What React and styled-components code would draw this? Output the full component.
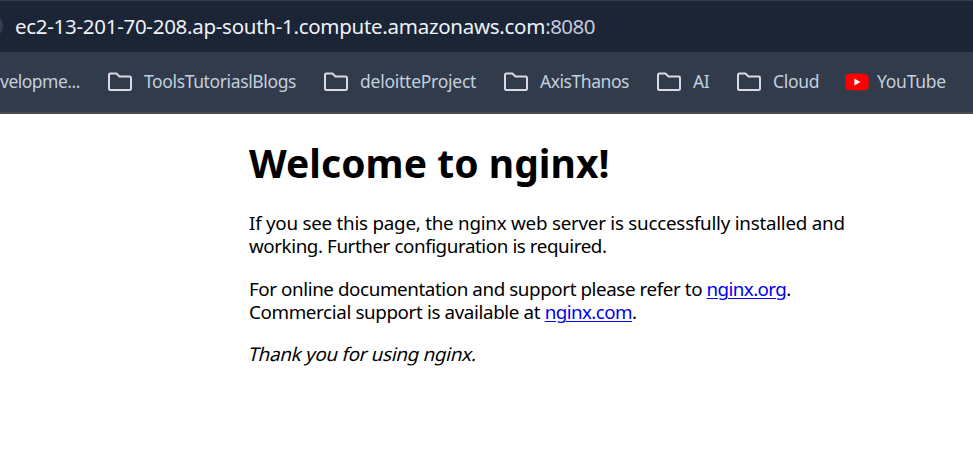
import React from 'react';
import styled, { createGlobalStyle } from 'styled-components';

const GlobalStyle = createGlobalStyle`
  * { box-sizing: border-box; }
  body { margin: 0; background: #fff; overflow: hidden; }
`;

const Browser = styled.div`
  width: 973px;
  height: 456px;
  overflow: hidden;
  background: #fff;
  font-family: "Noto Sans", "Open Sans", sans-serif;
`;

const AddressBar = styled.header`
  display: flex;
  align-items: center;
  height: 52px;
  padding-bottom: 2px;
  border-top: 1px solid #343e4e;
  background: #1c2535;
`;

const SiteButton = styled.span`
  flex: none;
  width: 24px;
  height: 24px;
  margin: 0 12px 0 -21px;
  border-radius: 50%;
  background: #353f4e;
`;

const Address = styled.span`
  font-size: 20.5px;
  line-height: 28px;
  letter-spacing: -0.28px;
  color: #eef2f8;
  white-space: nowrap;
`;

const Port = styled.span`
  letter-spacing: -0.5px;
  color: #c5c9dc;
`;

const BookmarksBar = styled.nav`
  display: flex;
  align-items: center;
  height: 62px;
  padding-bottom: 1px;
  border-bottom: 2px solid #4a4b4d;
  background: #313b4b;
`;

const Bookmark = styled.div`
  display: flex;
  flex: none;
  align-items: center;
  gap: ${({ $gap }) => $gap || 11}px;
  width: ${({ $width }) => $width}px;
  svg { flex: none; }
`;

const Label = styled.span`
  padding-bottom: 2px;
  font-size: 17.5px;
  line-height: 24px;
  letter-spacing: ${({ $spacing }) => $spacing}px;
  color: #c3cfde;
  white-space: nowrap;
`;

const Page = styled.main`
  width: 700px;
  margin-left: 249px;
  padding-top: 25px;
  color: #000;
`;

const Title = styled.h1`
  margin: 0 0 26px;
  font: bold 39px/47px "Noto Sans", sans-serif;
  letter-spacing: 0.05px;
`;

const Paragraph = styled.p`
  margin: 0 0 20px;
  font-size: 18.8px;
  line-height: 23px;
  white-space: nowrap;
`;

const Run = styled.span`
  letter-spacing: ${({ $spacing }) => $spacing}px;
`;

const Link = styled.a`
  letter-spacing: ${({ $spacing }) => $spacing}px;
  color: #0000ee;
  text-decoration: underline;
  text-decoration-thickness: 1px;
  text-underline-offset: 2px;
  text-decoration-skip-ink: auto;
`;

const ThanksLine = styled(Paragraph)`
  margin-top: -1px;
`;

const Thanks = styled.em`
  display: inline-block;
  font-style: normal;
  letter-spacing: -0.27px;
  transform: skewX(-14deg);
`;

const FolderIcon = () => (
  <svg width="25" height="20" viewBox="0 0 25 20" fill="none">
    <path
      d="M2.3 1.6H8.4L11.5 4.5H21.7Q23 4.5 23 5.9V16.7Q23 18.1 21.7 18.1H2.3Q1 18.1 1 16.7V3Q1 1.6 2.3 1.6Z"
      stroke="#dcd9e2"
      strokeWidth="2"
      strokeLinejoin="round"
    />
  </svg>
);

const YouTubeIcon = () => (
  <svg width="24" height="18" viewBox="0 0 24 18">
    <path
      d="M3 .9Q12 0 21 .9Q23.2 1.1 23.5 3.5Q24 9 23.5 14.3Q23.2 16.8 21 17Q12 17.8 3 17Q.8 16.8 .5 14.3Q0 9 .5 3.5Q.8 1.1 3 .9Z"
      fill="#ff0000"
    />
    <path d="M9.4 5.4L15.5 9L9.4 12.6Z" fill="#fff" />
  </svg>
);

const folders = [
  { name: 'ToolsTutoriaslBlogs', width: 216, spacing: -0.38 },
  { name: 'deloitteProject', width: 180, spacing: -0.25 },
  { name: 'AxisThanos', width: 153, spacing: -0.45 },
  { name: 'AI', width: 80, spacing: -0.5 },
  { name: 'Cloud', width: 108, spacing: -0.3 },
];

export default function App() {
  return (
    <Browser>
      <GlobalStyle />
      <AddressBar>
        <SiteButton />
        <Address>
          ec2-13-201-70-208.ap-south-1.compute.amazonaws.com<Port>:8080</Port>
        </Address>
      </AddressBar>
      <BookmarksBar>
        <Bookmark $width={108}>
          <Label $spacing={-0.5}>velopme...</Label>
        </Bookmark>
        {folders.map(({ name, width, spacing }) => (
          <Bookmark key={name} $width={width}>
            <FolderIcon />
            <Label $spacing={spacing}>{name}</Label>
          </Bookmark>
        ))}
        <Bookmark $width={110} $gap={8}>
          <YouTubeIcon />
          <Label $spacing={-0.25}>YouTube</Label>
        </Bookmark>
      </BookmarksBar>
      <Page>
        <Title>Welcome to nginx!</Title>
        <Paragraph>
          <Run $spacing={-0.24}>If you see this page, the nginx web server is successfully installed and</Run>
          <br />
          <Run $spacing={-0.42}>working. Further configuration is required.</Run>
        </Paragraph>
        <Paragraph>
          <Run $spacing={-0.41}>For online documentation and support please refer to </Run>
          <Link $spacing={-0.6} href="#">nginx.org</Link>.
          <br />
          <Run $spacing={-0.37}>Commercial support is available at </Run>
          <Link $spacing={-0.57} href="#">nginx.com</Link>.
        </Paragraph>
        <ThanksLine>
          <Thanks>Thank you for using nginx.</Thanks>
        </ThanksLine>
      </Page>
    </Browser>
  );
}
